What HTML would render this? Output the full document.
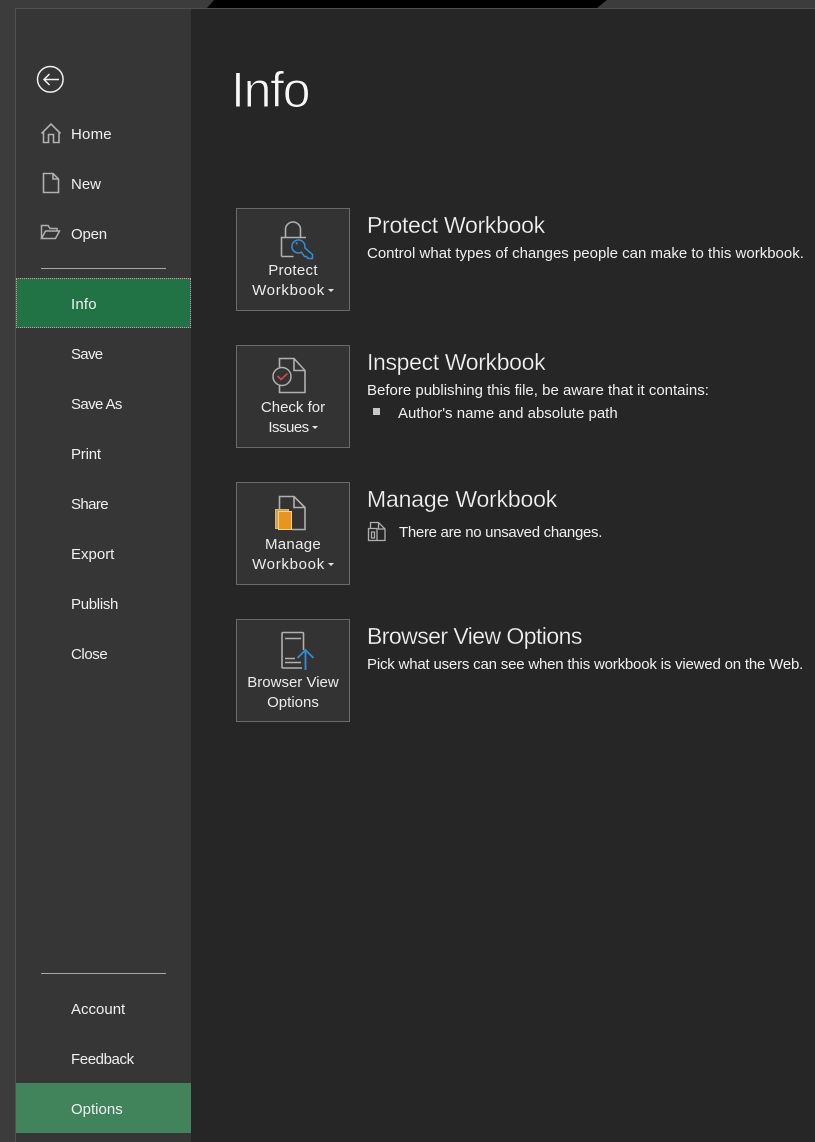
<!DOCTYPE html>
<html><head><meta charset="utf-8">
<style>
html,body{margin:0;padding:0;width:815px;height:1142px;overflow:hidden;background:#3c3c3c;}
body{position:relative;font-family:"Liberation Sans",sans-serif;color:#f0f0f0;}
.a{position:absolute;white-space:nowrap;}
.nav{left:71px;font-size:15px;line-height:20px;}
.h{left:367px;font-size:23px;line-height:30px;font-weight:400;color:#f2f2f2;-webkit-text-stroke:.25px #262626;}
.t{font-size:15px;line-height:20px;color:#f0f0f0;}
.btn{position:absolute;left:236px;width:112px;height:101px;background:#333;border:1px solid #6a6a6a;}
.bl{position:absolute;left:0;width:112px;text-align:center;font-size:15px;line-height:20px;color:#ececec;white-space:nowrap;}
.car{display:inline-block;width:0;height:0;border-left:3px solid transparent;border-right:3px solid transparent;border-top:3px solid #e6e6e6;vertical-align:3px;margin-left:3px;}
svg{position:absolute;overflow:visible;}
</style></head>
<body>
<div class="a" style="left:0;top:0;width:815px;height:8px;background:#3c3c3c"></div>
<svg style="left:0;top:0" width="815" height="9"><polygon points="214,0 607,0 597,8 207,8" fill="#000"/></svg>
<div class="a" style="left:15px;top:8px;width:800px;height:1134px;background:#505050"></div>
<div class="a" style="left:16px;top:9px;width:175px;height:1133px;background:#363636"></div>
<div class="a" style="left:191px;top:9px;width:624px;height:1133px;background:#262626"></div>

<svg style="left:0;top:0" width="200" height="260" fill="none">
<circle cx="50.300" cy="79.300" r="12.800" stroke="#f0f0f0" stroke-width="1.500"/>
<path d="M44 79.500H59M49.500 74L44 79.500L49.500 85" stroke="#f0f0f0" stroke-width="1.500"/>
<path d="M41.500 133.500L51 124L60.500 133.500M43.500 131.500V142.500H48.500V134.500H53.500V142.500H59V131.500" stroke="#b0b0b0" stroke-width="1.600"/>
<path d="M43.500 173.500H53L58.500 179V192.500H43.500ZM53 173.500V179H58.500" stroke="#b0b0b0" stroke-width="1.600"/>
<path d="M41.500 238.500V225.500H48L50 228.500H57V231M41.500 238.500H55.500L59.500 231H45.500Z" stroke="#b0b0b0" stroke-width="1.500"/>
</svg>
<div class="a" style="left:41px;top:268px;width:125px;height:1px;background:#a8a8a8"></div>
<div class="a" style="left:16px;top:278px;width:173px;height:48px;background:#217346;border:1px dotted #e88bb5"></div>
<div class="a" style="left:41px;top:973px;width:125px;height:1px;background:#a8a8a8"></div>
<div class="a" style="left:16px;top:1083px;width:175px;height:50px;background:#41835b"></div>

<div class="a nav" style="top:125px;letter-spacing:.2px">Home</div>
<div class="a nav" style="top:175px">New</div>
<div class="a nav" style="top:225px;letter-spacing:-.2px">Open</div>
<div class="a nav" style="top:295px;letter-spacing:.2px">Info</div>
<div class="a nav" style="top:345px;letter-spacing:-.7px">Save</div>
<div class="a nav" style="top:395px;letter-spacing:-.6px">Save As</div>
<div class="a nav" style="top:445px;letter-spacing:-.2px">Print</div>
<div class="a nav" style="top:495px;letter-spacing:-.6px">Share</div>
<div class="a nav" style="top:545px">Export</div>
<div class="a nav" style="top:595px;letter-spacing:-.3px">Publish</div>
<div class="a nav" style="top:645px;letter-spacing:-.4px">Close</div>
<div class="a nav" style="top:1000px">Account</div>
<div class="a nav" style="top:1050px;letter-spacing:-.4px">Feedback</div>
<div class="a nav" style="top:1100px">Options</div>

<div class="a" style="left:231px;top:59px;font-size:50px;line-height:62px;color:#f8f8f8;letter-spacing:-1.300px;-webkit-text-stroke:1px #262626">Info</div>

<div class="btn" style="top:208px">
<div class="bl" style="top:52px;letter-spacing:.3px">Protect</div>
<div class="bl" style="top:72px"><span style="letter-spacing:.7px">Workbook</span><span class="car"></span></div>
</div>
<svg style="left:236px;top:208px" width="114" height="60" fill="none">
<path d="M49.500 29.500V21.500A7.500 7.500 0 0 1 64.500 21.500V29.500M45.500 48.500V29.500H70M45.500 48.500H57.500" stroke="#b0b0b0" stroke-width="1.600"/>
<path d="M65.500 44.200A6.500 6.500 0 1 1 68.800 39.800L76.500 46.500V50.500H72L70.500 48.500H68.500Z" stroke="#2f8fd6" stroke-width="1.500" fill="#333"/>
<circle cx="60.700" cy="35.400" r="1.100" fill="#2f8fd6"/>
</svg>

<div class="btn" style="top:345px">
<div class="bl" style="top:52px">Check for</div>
<div class="bl" style="top:72px"><span style="letter-spacing:-.5px">Issues</span><span class="car"></span></div>
</div>
<svg style="left:236px;top:345px" width="114" height="60" fill="none">
<path d="M43.500 22V13.500H58L69 25.500V47.500H43.500V40.500M58 13.500V25.500H69" stroke="#b0b0b0" stroke-width="1.600"/>
<circle cx="46" cy="31.500" r="9" stroke="#b0b0b0" stroke-width="1.500" fill="#333"/>
<path d="M41.500 31L45 34.500L51.500 28.500" stroke="#d8434b" stroke-width="1.700"/>
</svg>

<div class="btn" style="top:482px">
<div class="bl" style="top:52px;letter-spacing:.3px">Manage</div>
<div class="bl" style="top:72px"><span style="letter-spacing:.7px">Workbook</span><span class="car"></span></div>
</div>
<svg style="left:236px;top:482px" width="114" height="60" fill="none">
<path d="M43.500 27V14.500H58L69 25.500V47.500H56M58 14.500V25.500H69" stroke="#b0b0b0" stroke-width="1.600"/>
<rect x="39.500" y="27.500" width="13" height="19" fill="#c9a35c" stroke="#d9b66f"/>
<rect x="42.500" y="29.500" width="13" height="18" fill="#e8941f" stroke="#f3d28e"/>
</svg>

<div class="btn" style="top:619px">
<div class="bl" style="top:53px">Browser View</div>
<div class="bl" style="top:73px">Options</div>
</div>
<svg style="left:236px;top:619px" width="114" height="60" fill="none">
<path d="M67.500 31V14.500Q67.500 13.500 66.500 13.500H47Q46 13.500 46 14.500V48Q46 49 47 49H66" stroke="#b0b0b0" stroke-width="1.600"/>
<path d="M49 19.500H65M49 39.500H59M49 43.500H65" stroke="#b0b0b0" stroke-width="1.500"/>
<path d="M69.500 31V51M61.500 39L69.500 31L77.500 39" stroke="#2f8fd6" stroke-width="1.800"/>
</svg>

<div class="a h" style="top:210px;letter-spacing:-.28px">Protect Workbook</div>
<div class="a t" style="left:367px;top:244px">Control what types of changes people can make to this workbook.</div>

<div class="a h" style="top:347px;letter-spacing:-.34px">Inspect Workbook</div>
<div class="a t" style="left:367px;top:381px">Before publishing this file, be aware that it contains:</div>
<div class="a" style="left:373px;top:408px;width:7px;height:7px;background:#c8c8c8"></div>
<div class="a t" style="left:398px;top:404px">Author's name and absolute path</div>

<div class="a h" style="top:484px;letter-spacing:-.17px">Manage Workbook</div>
<svg style="left:367px;top:520px" width="20" height="22" fill="none">
<path d="M3.500 8V2.500H11.500L18 9V20.500H10.500M11.500 2.500V9H18" stroke="#b0b0b0" stroke-width="1.300"/>
<path d="M1.500 8.500H10V20.500H1.500ZM4.500 12H7.500V18H4.500Z" stroke="#b0b0b0" stroke-width="1.300"/>
</svg>
<div class="a t" style="left:399px;top:523px;letter-spacing:-.3px">There are no unsaved changes.</div>

<div class="a h" style="top:621px;letter-spacing:-.55px">Browser View Options</div>
<div class="a t" style="left:367px;top:655px;letter-spacing:-.19px">Pick what users can see when this workbook is viewed on the Web.</div>
</body></html>
